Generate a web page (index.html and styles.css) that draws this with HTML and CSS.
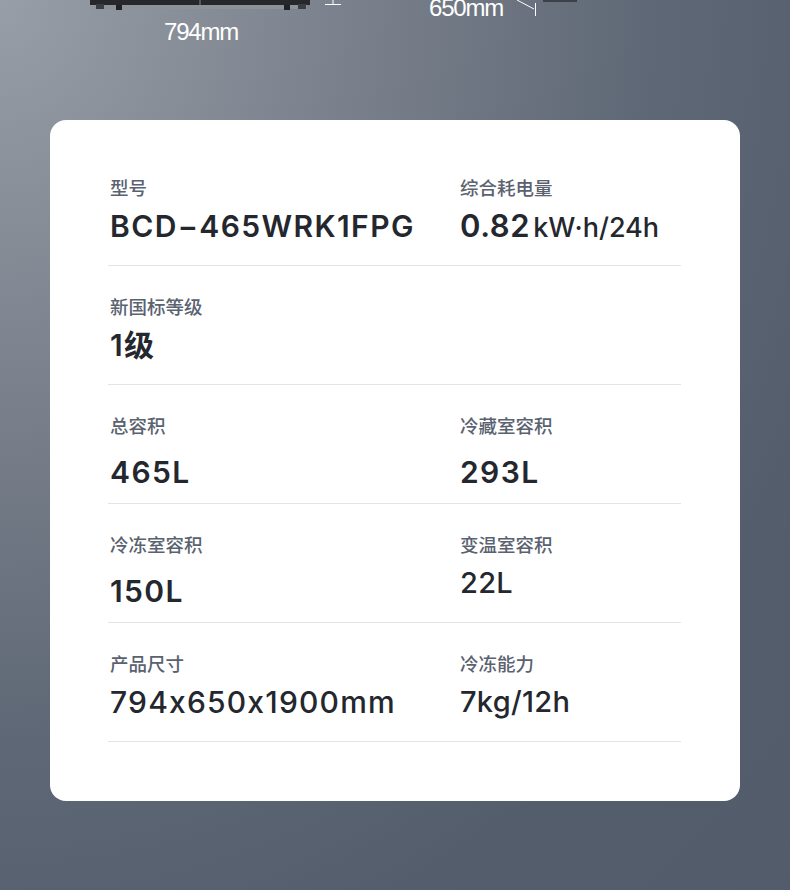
FILE: index.html
```html
<!DOCTYPE html>
<html lang="zh-CN">
<head>
<meta charset="utf-8">
<title>规格参数</title>
<link rel="stylesheet" href="styles.css">
</head>
<body>
<div class="page">
  <div class="hero">
    <svg class="hero-art" width="790" height="120" viewBox="0 0 790 120" aria-hidden="true">
      <rect x="90" y="0" width="220" height="5" fill="#26282c"/>
      <rect x="199" y="0" width="2" height="5" fill="#55585e"/>
      <rect x="95" y="5" width="212" height="4" fill="#8d9299"/>
      <rect x="96" y="4" width="8" height="5" fill="#3a3d42"/>
      <rect x="298" y="4" width="8" height="5" fill="#3a3d42"/>
      <rect x="116" y="5" width="6" height="5" fill="#202226"/>
      <rect x="284" y="5" width="6" height="5" fill="#202226"/>
      <line x1="333" y1="0" x2="333" y2="5" stroke="#ffffff" stroke-width="1"/>
      <line x1="325" y1="4.5" x2="341" y2="4.5" stroke="#ffffff" stroke-width="1"/>
      <line x1="517" y1="0" x2="534" y2="9" stroke="#ffffff" stroke-width="1"/>
      <line x1="535.5" y1="3" x2="535.5" y2="16" stroke="#ffffff" stroke-width="1"/>
      <rect x="543" y="0" width="34" height="2" fill="#3b4049"/>
    </svg>
    <span class="dim dim-width">794mm</span>
    <span class="dim dim-depth">650mm</span>
  </div>

  <section class="card">
    <div class="row">
      <div class="cell">
        <div class="label">型号</div>
        <div class="value">BCD−465WRK1FPG</div>
      </div>
      <div class="cell">
        <div class="label">综合耗电量</div>
        <div class="value"><span class="num-big">0.82</span><span class="unit">kW·h/24h</span></div>
      </div>
    </div>
    <div class="row">
      <div class="cell">
        <div class="label">新国标等级</div>
        <div class="value">1级</div>
      </div>
    </div>
    <div class="row">
      <div class="cell">
        <div class="label">总容积</div>
        <div class="value value-low">465L</div>
      </div>
      <div class="cell">
        <div class="label">冷藏室容积</div>
        <div class="value value-low">293L</div>
      </div>
    </div>
    <div class="row">
      <div class="cell">
        <div class="label">冷冻室容积</div>
        <div class="value value-low">150L</div>
      </div>
      <div class="cell">
        <div class="label">变温室容积</div>
        <div class="value value-medium">22L</div>
      </div>
    </div>
    <div class="row">
      <div class="cell">
        <div class="label">产品尺寸</div>
        <div class="value value-wide">794x650x1900mm</div>
      </div>
      <div class="cell">
        <div class="label">冷冻能力</div>
        <div class="value value-medium">7kg/12h</div>
      </div>
    </div>
  </section>
</div>
</body>
</html>
```

FILE: styles.css
```css
* {
  box-sizing: border-box;
}

html, body {
  margin: 0;
  padding: 0;
}

body {
  width: 790px;
  height: 890px;
  overflow: hidden;
  font-family: Inter, "Noto Sans CJK SC", "Liberation Sans", sans-serif;
  font-feature-settings: "calt" 0;
  background: #535d6b;
}

.page {
  width: 790px;
  height: 890px;
  background: radial-gradient(ellipse farthest-corner at 0 0, #989ea7 0%, #7b828d 30%, #5f6876 58%, #535d6b 80%, #525c6a 100%);
  padding-bottom: 89px;
}

.hero {
  position: relative;
  height: 120px;
  overflow: hidden;
}

.hero-art {
  position: absolute;
  left: 0;
  top: 0;
}

.dim {
  position: absolute;
  font-family: "Liberation Sans", Arial, sans-serif;
  font-size: 24px;
  line-height: 24px;
  letter-spacing: -1.2px;
  color: #ffffff;
}

.dim-width {
  left: 164px;
  top: 20px;
}

.dim-depth {
  left: 429px;
  top: -4px;
}

.card {
  margin: 0 50px;
  height: 681px;
  background: #ffffff;
  border-radius: 16px;
  padding: 27px 59px 0 58px;
}

.row {
  display: grid;
  grid-template-columns: 350px 1fr;
  height: 119px;
  border-bottom: 1px solid #e3e4e6;
}

.cell {
  padding: 28px 0 0 2px;
}

.label {
  font-family: "Noto Sans CJK SC", sans-serif;
  font-size: 18.5px;
  line-height: 24px;
  font-weight: 500;
  color: #5a6270;
}

.value {
  margin-top: 9px;
  height: 36px;
  font-size: 30px;
  line-height: 36px;
  font-weight: 600;
  letter-spacing: 1.4px;
  color: #24272e;
  white-space: nowrap;
}

.value-low {
  margin-top: 17px;
}

.value-medium {
  font-weight: 500;
  font-size: 29px;
  letter-spacing: 0.3px;
}

.value-wide {
  font-weight: 500;
  font-size: 30px;
  letter-spacing: 1.2px;
}

.num-big {
  font-size: 31px;
  font-weight: 600;
  letter-spacing: 0.6px;
  margin-right: 3px;
}

.unit {
  font-size: 27px;
  font-weight: 500;
  letter-spacing: 0;
}
```
